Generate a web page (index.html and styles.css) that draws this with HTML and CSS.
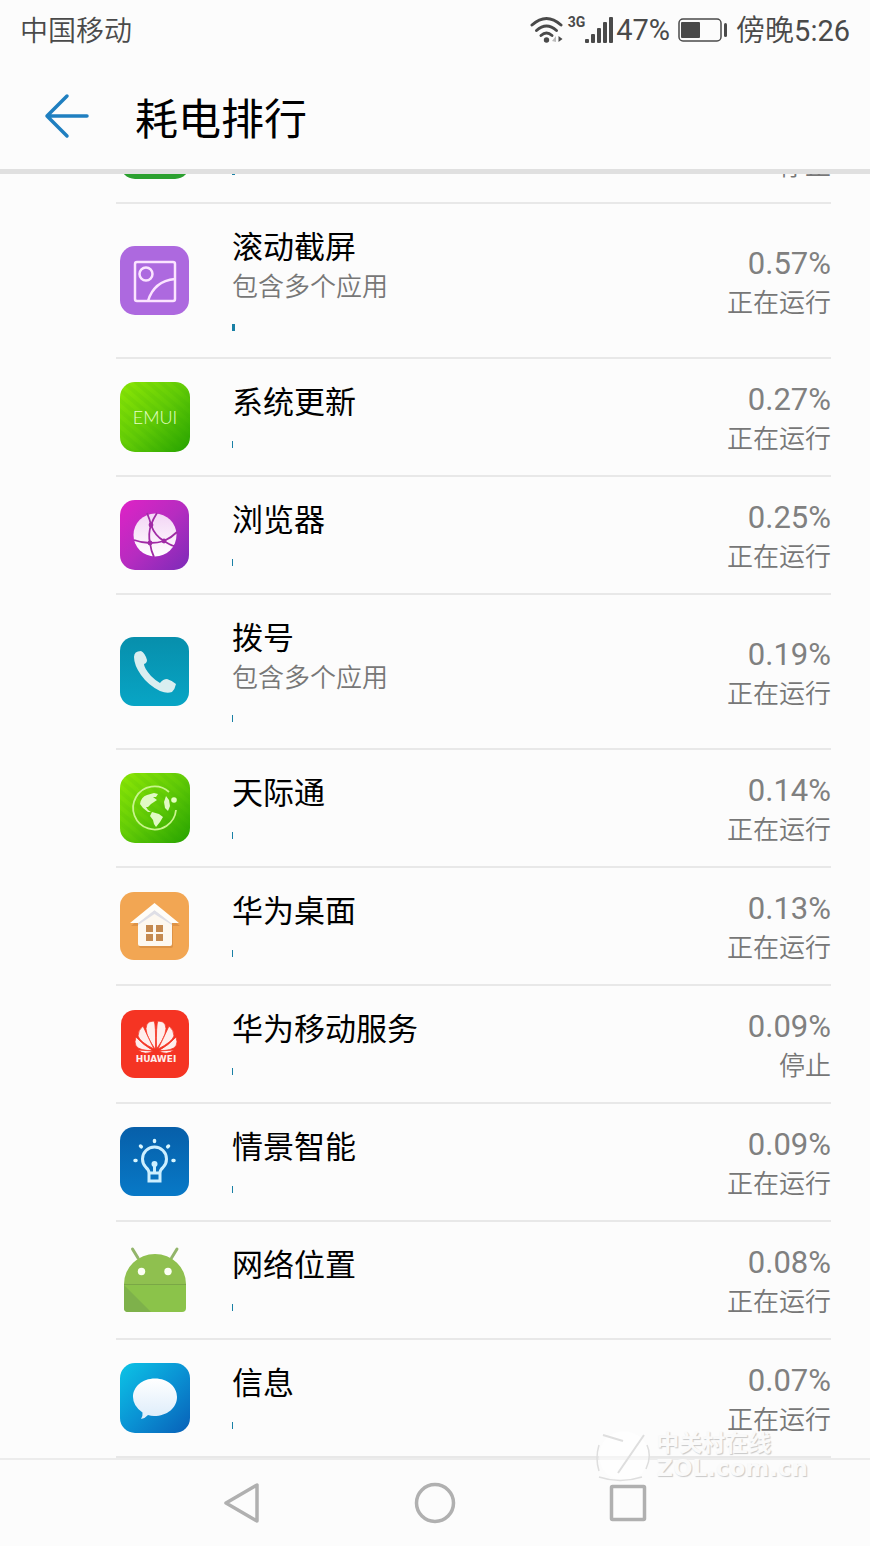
FILE: index.html
```html
<!DOCTYPE html>
<html lang="zh-CN">
<head>
  <meta charset="UTF-8" />
  <meta name="viewport" content="width=device-width, initial-scale=1" />
  <title>耗电排行</title>
  <link rel="stylesheet" href="styles.css">
</head>
<body>

<div class="statusbar">
  <span class="carrier">中国移动</span>
  <svg class="wifi" width="34" height="28" viewBox="0 0 34 28">
    <g fill="none" stroke="#4a4a4a" stroke-width="3" stroke-linecap="round">
      <path d="M2 9Q16.500 -4 31 9"/>
      <path d="M6.500 14.500Q16.500 5.500 26.500 14.500"/>
      <path d="M11 19.500Q16.500 14.500 22 19.500"/>
    </g>
    <circle cx="16.500" cy="24" r="2.700" fill="#4a4a4a"/>
    <path d="M22 25l4-5v6z" fill="#bbb"/>
    <path d="M28.500 20v6l4-3z" fill="#4a4a4a"/>
  </svg>
  <span class="net">3G</span>
  <svg class="signal" width="28" height="27" viewBox="0 0 28 27" fill="#4a4a4a">
    <rect x="0" y="22" width="4" height="4" rx="1"/>
    <rect x="6" y="17" width="4" height="9" rx="1"/>
    <rect x="12" y="11" width="4" height="15" rx="1"/>
    <rect x="18" y="5" width="4" height="21" rx="1"/>
    <rect x="24" y="0" width="4" height="26" rx="1"/>
  </svg>
  <span class="level">47%</span>
  <svg class="battery" width="50" height="26" viewBox="0 0 50 26">
    <rect x="1" y="2" width="42" height="22" rx="4" fill="none" stroke="#4a4a4a" stroke-width="1.500"/>
    <rect x="3" y="5" width="19" height="16" rx="1" fill="#4a4a4a"/>
    <rect x="46" y="6" width="3" height="14" rx="1.500" fill="#4a4a4a"/>
  </svg>
  <span class="clock">傍晚<time>5:26</time></span>
</div>

<header class="header">
  <button class="back" aria-label="返回">
    <svg width="46" height="46" viewBox="0 0 46 46" fill="none" stroke="#1f7fc0" stroke-width="3.500" stroke-linecap="round" stroke-linejoin="round">
      <path d="M23 3L3 23L23 43M3 23H43"/>
    </svg>
  </button>
  <h1>耗电排行</h1>
</header>

<ul class="list">
  <li class="app">
    <svg class="icon" viewBox="0 0 70 70"><rect width="70" height="70" rx="15" fill="#2ba02f"/></svg>
    <div class="info">
      <div class="name"></div>
      <div class="bar" style="width: 0.57%"></div>
    </div>
    <div class="usage"><div class="percent"></div><div class="state">停止</div></div>
  </li>

  <li class="app">
    <svg class="icon" viewBox="0 0 70 70">
      <rect width="69" height="69" rx="15" fill="#ad69df"/>
      <g fill="none" stroke="#fbe4ff" stroke-width="2.500">
        <rect x="15" y="16" width="40" height="39" rx="2"/>
        <circle cx="26" cy="28" r="6.500"/>
        <path d="M28 55Q34 35 55 33"/>
      </g>
    </svg>
    <div class="info">
      <div class="name">滚动截屏</div>
      <div class="note">包含多个应用</div>
      <div class="bar" style="width: 0.57%"></div>
    </div>
    <div class="usage"><div class="percent">0.57%</div><div class="state">正在运行</div></div>
  </li>

  <li class="app">
    <svg class="icon" viewBox="0 0 70 70">
      <defs>
        <linearGradient id="green" x1="0" y1="0" x2="1" y2="1">
          <stop offset="0" stop-color="#8ee805"/>
          <stop offset=".5" stop-color="#62cb06"/>
          <stop offset="1" stop-color="#25a200"/>
        </linearGradient>
        <pattern id="stripes" width="8" height="8" patternUnits="userSpaceOnUse" patternTransform="rotate(-50)">
          <rect width="4" height="8" fill="#279900" fill-opacity=".08"/>
        </pattern>
      </defs>
      <rect width="70" height="70" rx="15" fill="url(#green)"/>
      <rect width="70" height="70" rx="15" fill="url(#stripes)"/>
      <text class="emui" x="35" y="42" text-anchor="middle">EMUI</text>
    </svg>
    <div class="info">
      <div class="name">系统更新</div>
      <div class="bar" style="width: 0.27%"></div>
    </div>
    <div class="usage"><div class="percent">0.27%</div><div class="state">正在运行</div></div>
  </li>

  <li class="app">
    <svg class="icon" viewBox="0 0 70 70">
      <defs>
        <linearGradient id="purple" x1="0" y1="0" x2="1" y2="1">
          <stop offset="0" stop-color="#df22c6"/>
          <stop offset=".5" stop-color="#b62cc0"/>
          <stop offset="1" stop-color="#7c2bb8"/>
        </linearGradient>
        <linearGradient id="globe" x1="0" y1="0" x2="0" y2="1">
          <stop offset="0" stop-color="#f3d5f5"/>
          <stop offset="1" stop-color="#fff"/>
        </linearGradient>
      </defs>
      <rect width="69" height="70" rx="15" fill="url(#purple)"/>
      <circle cx="35" cy="35" r="21.500" fill="url(#globe)"/>
      <g fill="none" stroke="#a02ba5" stroke-width="1.800">
        <path d="M27 13Q30 20 31 25Q35 36 44 41Q50 45 54 46"/>
        <path d="M37 13Q33 19 31 25Q28 34 30 43Q31 51 34 57"/>
        <path d="M14 40Q22 43 30 43Q38 43 44 41Q51 38 57 32"/>
      </g>
      <g fill="#a02ba5"><circle cx="31" cy="25" r="2.400"/><circle cx="30" cy="43" r="2.400"/><circle cx="44" cy="41" r="2.400"/></g>
    </svg>
    <div class="info">
      <div class="name">浏览器</div>
      <div class="bar" style="width: 0.25%"></div>
    </div>
    <div class="usage"><div class="percent">0.25%</div><div class="state">正在运行</div></div>
  </li>

  <li class="app">
    <svg class="icon" viewBox="0 0 70 70">
      <defs>
        <linearGradient id="teal" x1="0" y1="0" x2="0" y2="1">
          <stop offset="0" stop-color="#078fac"/>
          <stop offset="1" stop-color="#08a5c5"/>
        </linearGradient>
      </defs>
      <rect width="69" height="69" rx="14" fill="url(#teal)"/>
      <path d="M14 20Q14 14 21 14Q25 16 27 23Q27 26 24 27Q24 31 31 39Q36 44 40 46Q43 42 47 42Q53 44 56 47Q55 52 52 55Q47 57 40 54Q28 48 21 38Q14 28 14 20z" fill="#d9eef0"/>
    </svg>
    <div class="info">
      <div class="name">拨号</div>
      <div class="note">包含多个应用</div>
      <div class="bar" style="width: 0.19%"></div>
    </div>
    <div class="usage"><div class="percent">0.19%</div><div class="state">正在运行</div></div>
  </li>

  <li class="app">
    <svg class="icon" viewBox="0 0 70 70">
      <rect width="70" height="70" rx="15" fill="url(#green)"/>
      <rect width="70" height="70" rx="15" fill="url(#stripes)"/>
      <path d="M56 37A21.500 21.500 0 1 1 49 19" fill="none" stroke="#c9f58c" stroke-width="1.800"/>
      <circle cx="54" cy="27" r="2.800" fill="#e4ffc0"/>
      <g fill="#e1fac5">
        <path d="M20 31Q21 24 27 22L34 20L38 21L36 24L33 24L37 27L31 31L28 34L26 34L28 37L31 39L28 39L23 35z"/>
        <path d="M32 39L39 41L43 44L40 49L36 54L34 51L33 47L30 43z"/>
        <path d="M46 23L49 27L50 33L48 38L45 35L44 29z"/>
      </g>
    </svg>
    <div class="info">
      <div class="name">天际通</div>
      <div class="bar" style="width: 0.14%"></div>
    </div>
    <div class="usage"><div class="percent">0.14%</div><div class="state">正在运行</div></div>
  </li>

  <li class="app">
    <svg class="icon" viewBox="0 0 70 70">
      <rect y="1" width="69" height="68" rx="14" fill="#f2a653"/>
      <path d="M35 15L60 35H53V55Q53 57 51 57H21Q19 57 19 55V35H11z" fill="#c9803a" opacity=".5"/>
      <path d="M18 31L34.500 18L52 31V53Q52 55 50 55H20Q18 55 18 53z" fill="#fdf8f0"/>
      <path d="M18 32L34.500 19L52 32V34L34.500 23L18 34z" fill="#dfdfe6"/>
      <path d="M34.500 12L59 32H51L34.500 19L18 32H10z" fill="#fffdf8"/>
      <g fill="#c58a50">
        <rect x="26" y="34" width="7" height="7"/><rect x="36" y="34" width="7" height="7"/>
        <rect x="26" y="43" width="7" height="7"/><rect x="36" y="43" width="7" height="7"/>
      </g>
    </svg>
    <div class="info">
      <div class="name">华为桌面</div>
      <div class="bar" style="width: 0.13%"></div>
    </div>
    <div class="usage"><div class="percent">0.13%</div><div class="state">正在运行</div></div>
  </li>

  <li class="app">
    <svg class="icon" viewBox="0 0 70 70">
      <rect x="1" y="1" width="68" height="68" rx="14" fill="#f53423"/>
      <g fill="#ffeeec" stroke="#f53423" stroke-width=".8">
        <path d="M35 40Q23 23 27 15Q29 12 34 12Q36 15 35.500 40z"/>
        <path d="M36.500 40Q36 15 38 12Q43 12 45 15Q49 23 36.500 40z"/>
        <path d="M34 40Q20 33 18 27Q18 21 23 17Q28 28 34 40z"/>
        <path d="M38 40Q52 33 54 27Q54 21 49 17Q44 28 38 40z"/>
        <path d="M33 41.500Q20 42 16 37Q14 33 16 28Q23 36 33 41.500z"/>
        <path d="M39 41.500Q52 42 56 37Q58 33 56 28Q49 36 39 41.500z"/>
        <path d="M33 42Q25 47 18 41z"/>
        <path d="M39 42Q47 47 54 41z"/>
      </g>
      <text class="huawei" x="36" y="53" text-anchor="middle">HUAWEI</text>
    </svg>
    <div class="info">
      <div class="name">华为移动服务</div>
      <div class="bar" style="width: 0.09%"></div>
    </div>
    <div class="usage"><div class="percent">0.09%</div><div class="state">停止</div></div>
  </li>

  <li class="app">
    <svg class="icon" viewBox="0 0 70 70">
      <defs>
        <linearGradient id="navy" x1="0" y1="0" x2="0" y2="1">
          <stop offset="0" stop-color="#075fa9"/>
          <stop offset="1" stop-color="#0879c7"/>
        </linearGradient>
      </defs>
      <rect width="69" height="69" rx="14" fill="url(#navy)"/>
      <g fill="none" stroke="#cdefff" stroke-width="3">
        <path d="M29 46Q29 43 26 40.500A12 12 0 1 1 43 40.500Q40 43 40 46V54H29zM29 46H40"/>
        <path d="M34.500 46V38"/>
      </g>
      <circle cx="34.500" cy="37" r="3" fill="#cdefff"/>
      <g stroke="#d8f6ff" stroke-width="3.500" stroke-linecap="round">
        <path d="M34.500 13.500v1M20.500 19l.8.800M48.500 19l-.8.800M15 33.500h1M53 33.500h1"/>
      </g>
    </svg>
    <div class="info">
      <div class="name">情景智能</div>
      <div class="bar" style="width: 0.09%"></div>
    </div>
    <div class="usage"><div class="percent">0.09%</div><div class="state">正在运行</div></div>
  </li>

  <li class="app">
    <svg class="icon" viewBox="0 0 70 70">
      <path d="M12.500 4L18 13M57 4L51.500 13" stroke="#93b56b" stroke-width="3" stroke-linecap="round"/>
      <path d="M4 39A31 30 0 0 1 66 39z" fill="#8fc04f"/>
      <path d="M4 39H66V63Q66 67 62 67H8Q4 67 4 63z" fill="#8bc34a"/>
      <path d="M4 40L31 67H8Q4 67 4 63z" fill="#7eb14b"/>
      <path d="M4 39.500H66" stroke="#7aa746" stroke-width="1"/>
      <circle cx="21.500" cy="26.500" r="3.700" fill="#fcfff4"/>
      <circle cx="48" cy="26.500" r="3.700" fill="#fcfff4"/>
    </svg>
    <div class="info">
      <div class="name">网络位置</div>
      <div class="bar" style="width: 0.08%"></div>
    </div>
    <div class="usage"><div class="percent">0.08%</div><div class="state">正在运行</div></div>
  </li>

  <li class="app">
    <svg class="icon" viewBox="0 0 70 70">
      <defs>
        <linearGradient id="blue" x1="0" y1="0" x2="1" y2="1">
          <stop offset="0" stop-color="#0cc4e6"/>
          <stop offset=".5" stop-color="#0a93d4"/>
          <stop offset="1" stop-color="#0860b8"/>
        </linearGradient>
        <linearGradient id="bubble" x1="0" y1="0" x2="0" y2="1">
          <stop offset="0" stop-color="#fff"/>
          <stop offset="1" stop-color="#dcecfa"/>
        </linearGradient>
      </defs>
      <rect width="70" height="70" rx="15" fill="url(#blue)"/>
      <path d="M35 15.500C48 15.500 57 24 57 34C57 45 47 53 34 53Q31 53 28 52Q25 55.500 21 56Q23 53 22.500 49.500Q13 43 13 34C13 24 22 15.500 35 15.500z" fill="url(#bubble)"/>
    </svg>
    <div class="info">
      <div class="name">信息</div>
      <div class="bar" style="width: 0.07%"></div>
    </div>
    <div class="usage"><div class="percent">0.07%</div><div class="state">正在运行</div></div>
  </li>
</ul>

<nav class="navbar">
  <button aria-label="返回">
    <svg width="40" height="44" viewBox="0 0 40 44"><path d="M4 22L35 4V40z"/></svg>
  </button>
  <button aria-label="主屏幕">
    <svg width="44" height="44" viewBox="0 0 44 44"><circle cx="22" cy="22" r="18.500"/></svg>
  </button>
  <button aria-label="最近任务">
    <svg width="40" height="44" viewBox="0 0 40 44"><rect x="3.500" y="5.500" width="33" height="33" rx="1"/></svg>
  </button>
</nav>

<div class="watermark">
  <svg width="56" height="56" viewBox="0 0 56 56" fill="none">
    <circle cx="28" cy="28" r="25" fill="#fff" fill-opacity=".5"/>
    <g stroke="#dedede" stroke-width="1.500">
      <path d="M3 17Q-1 30 3 43M51 17Q56 28 50 41M3 49Q24 56 46 49"/>
      <path d="M7 7L27 13M48 7L22 45" stroke-width="2"/>
    </g>
  </svg>
  <div class="marktext">
    <span class="cn">中关村在线</span>
    <span class="en">ZOL.com.cn</span>
  </div>
</div>

</body>
</html>
```

FILE: styles.css
```css
* {
  box-sizing: border-box;
}
body {
  font-family: Roboto, "Noto Sans CJK SC", sans-serif;
  background: #fcfcfc;
  color: #000;
  margin: 0;
  height: 100vh;
  display: flex;
  flex-direction: column;
  position: relative;
  overflow: hidden;
}
button {
  background: none;
  border: none;
  padding: 0;
  cursor: pointer;
}
svg {
  display: block;
  flex: none;
}

/* status bar */
.statusbar {
  flex: none;
  height: 60px;
  padding: 0 20px;
  display: flex;
  align-items: center;
  color: #4a4a4a;
  font-size: 29px;
  line-height: 60px;
}
.carrier {
  font-size: 28px;
  font-weight: 350;
  padding-top: 3px;
  margin-right: auto;
}
.net {
  font-size: 14px;
  font-weight: bold;
  line-height: 16px;
  align-self: flex-start;
  margin: 14px 0 0 4px;
}
.level {
  margin: 0 8px 0 3px;
}
.clock {
  margin-left: 8px;
  padding-top: 2px;
  font-weight: 350;
}
.clock time {
  font-weight: normal;
}

/* title */
.header {
  flex: none;
  height: 114px;
  padding: 2px 44px 0;
  display: flex;
  align-items: center;
  border-bottom: 5px solid #e0e0e0;
}
.header h1 {
  margin: 0 0 0 45px;
  padding-top: 8px;
  font-size: 43px;
  font-weight: normal;
  line-height: 60px;
}

/* the list stays scrolled to its end */
.list {
  flex: 1;
  min-height: 0;
  margin: 0;
  padding: 0 39px 0 116px;
  list-style: none;
  display: flex;
  flex-direction: column;
  justify-content: flex-end;
  overflow: hidden;
}
.app {
  flex: none;
  display: flex;
  align-items: center;
  min-height: 118px;
  padding-left: 4px;
  border-bottom: 2px solid #e8e8e8;
}
.icon {
  width: 70px;
  height: 70px;
}
.info {
  flex: 1;
  align-self: flex-start;
  margin-left: 42px;
  padding: 24px 0 26px;
}
.name {
  height: 40px;
  font-size: 31px;
  line-height: 40px;
}
.note {
  font-size: 26px;
  font-weight: 350;
  line-height: 38px;
  color: #777;
}
.bar {
  height: 7px;
  min-width: 1px;
  margin-top: 18px;
  background: #1980a5;
}
.usage {
  padding-top: 5px;
  text-align: right;
  color: #808080;
}
.percent {
  height: 40px;
  font-size: 31px;
  line-height: 40px;
}
.state {
  font-size: 26px;
  font-weight: 350;
  line-height: 39px;
  color: #777;
}

.emui {
  font-family: Lato, sans-serif;
  font-size: 18px;
  font-weight: 300;
  fill: #e5ffc4;
}
.huawei {
  font-family: "DejaVu Sans", sans-serif;
  font-size: 9px;
  font-weight: bold;
  fill: #ffeeec;
}

/* bottom keys */
.navbar {
  flex: none;
  height: 88px;
  display: flex;
  justify-content: center;
  border-top: 2px solid #ececec;
}
.navbar button {
  width: 193px;
  display: flex;
  align-items: center;
  justify-content: center;
}
.navbar svg {
  fill: none;
  stroke: #b0b0b0;
  stroke-width: 3.5;
  stroke-linejoin: round;
}

.watermark {
  position: absolute;
  right: 62px;
  bottom: 62px;
  display: flex;
  align-items: center;
  gap: 4px;
  pointer-events: none;
}
.marktext span {
  display: block;
  color: #fafafa;
  text-shadow: 1px 1px 1px #c8c8c8;
  font-weight: bold;
  font-size: 23px;
  line-height: 24px;
}
.marktext .en {
  font-family: "DejaVu Sans", sans-serif;
}
```
